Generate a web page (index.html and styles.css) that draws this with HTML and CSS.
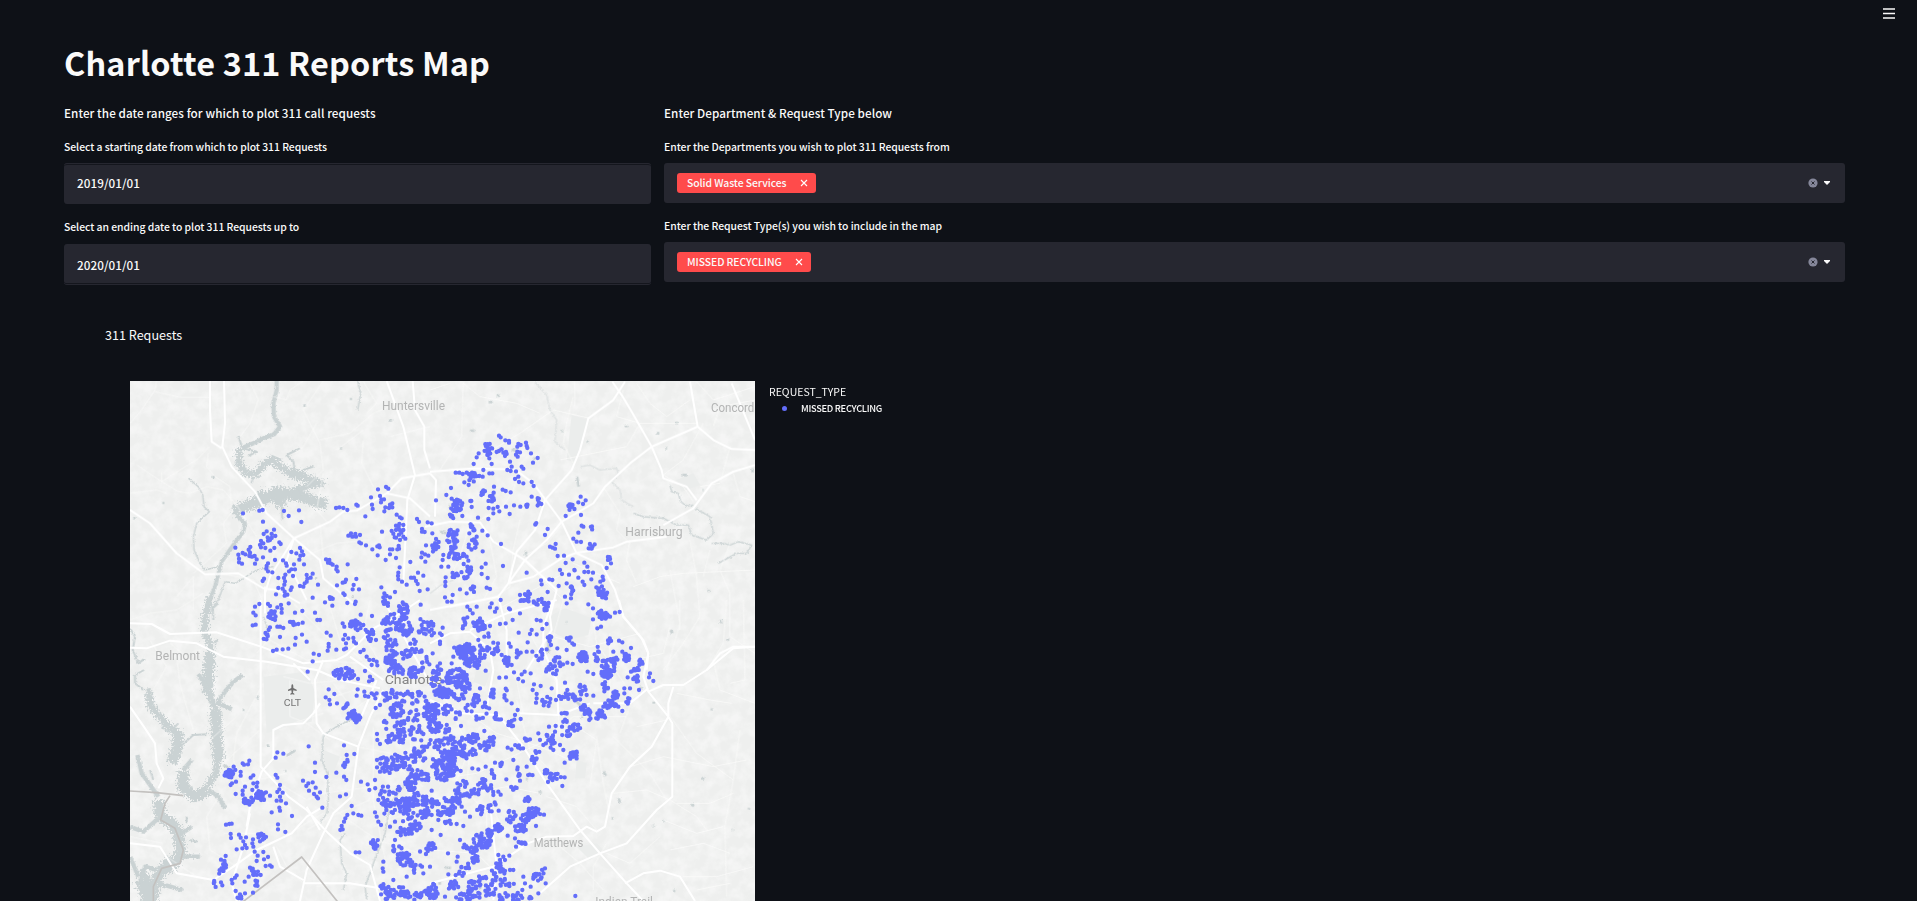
FILE: index.html
```html
<!DOCTYPE html>
<html lang="en">
<head>
<meta charset="utf-8">
<title>Charlotte 311 Reports Map</title>
<link rel="stylesheet" href="styles.css">
</head>
<body>
<header class="toolbar">
  <svg class="menu" viewBox="0 0 12 11"><path d="M0 1h12M0 5.5h12M0 10h12"/></svg>
</header>
<main class="page">
  <h1 class="title">Charlotte 311 Reports Map</h1>
  <div class="filters">
    <section class="dates">
      <p class="intro intro-dates">Enter the date ranges for which to plot 311 call requests</p>
      <label class="label l1">Select a starting date from which to plot 311 Requests</label>
      <div class="input line-top">2019/01/01</div>
      <label class="label l2">Select an ending date to plot 311 Requests up to</label>
      <div class="input line-bottom">2020/01/01</div>
    </section>
    <section class="types">
      <p class="intro intro-types">Enter Department &amp; Request Type below</p>
      <label class="label l3">Enter the Departments you wish to plot 311 Requests from</label>
      <div class="select">
        <span class="tag tag-dept"><span class="t1">Solid Waste Services</span><svg class="x" viewBox="0 0 8 8"><path d="M1 1l6 6M7 1l-6 6"/></svg></span>
        <span class="controls"><svg class="clear" viewBox="0 0 10 10"><circle cx="5" cy="5" r="4.6"/><path d="M3.5 3.5l3 3M6.500 3.500l-3 3"/></svg><svg class="caret" viewBox="0 0 6 4"><path d="M0 0h6v1l-3 3-3-3z"/></svg></span>
      </div>
      <label class="label l4">Enter the Request Type(s) you wish to include in the map</label>
      <div class="select">
        <span class="tag tag-type"><span class="t2">MISSED RECYCLING</span><svg class="x" viewBox="0 0 8 8"><path d="M1 1l6 6M7 1l-6 6"/></svg></span>
        <span class="controls"><svg class="clear" viewBox="0 0 10 10"><circle cx="5" cy="5" r="4.6"/><path d="M3.5 3.5l3 3M6.500 3.500l-3 3"/></svg><svg class="caret" viewBox="0 0 6 4"><path d="M0 0h6v1l-3 3-3-3z"/></svg></span>
      </div>
    </section>
  </div>
  <section class="chart">
    <h2 class="chart-title">311 Requests</h2>
    <div class="plot">
      <svg class="map" viewBox="0 0 1875 1560">
        <defs>
          <filter id="shore" x="-10%" y="-10%" width="120%" height="120%"><feTurbulence type="fractalNoise" baseFrequency=".17" numOctaves="2" seed="4"/><feDisplacementMap in="SourceGraphic" scale="9" xChannelSelector="R" yChannelSelector="G"/></filter>
          <filter id="lake" x="-10%" y="-10%" width="120%" height="120%" color-interpolation-filters="sRGB"><feTurbulence type="fractalNoise" baseFrequency=".2" numOctaves="3" seed="9"/><feDisplacementMap in="SourceGraphic" scale="34" xChannelSelector="R" yChannelSelector="G"/></filter>
          <filter id="land" x="-5%" y="-5%" width="110%" height="110%" color-interpolation-filters="sRGB"><feTurbulence type="fractalNoise" baseFrequency=".03" numOctaves="3" seed="8"/><feColorMatrix values="0 0 0 0 1  0 0 0 0 1  0 0 0 0 1  2.500 0 0 0 -.9"/></filter>
        </defs>
        <rect class="ground" width="1875" height="1560"/>
        <rect width="1875" height="1560" filter="url(#land)" opacity=".42"/>
        <g class="park">
          <path transform="translate(-120 657)" d="M520 230l130 -15 25 60 -10 90 -60 10 -75 25zM700 450l50 20-20 50-30-10z"/>
          <path transform="translate(900 -33)" d="M425 135l50 15-40 125-25-5zM355 740l50-25 80 30-10 50-60 15-60-30zM740 330l50-20 20 35-55 20z"/>
          <path transform="translate(900 657)" d="M440 480l30 10-5 45-30 0zM140 210l40 10-15 40-35-15zM440 740l60-10 20 20-40 30z"/>
        </g>
        <g class="water" filter="url(#lake)">
          <g transform="translate(-120 -213)">
            <path class="w16" d="M448 415V460L467 490 500 492 520 465 545 450 570 468 605 492 640 500 695 518 650 528 605 545"/>
            <path class="w24" d="M600 486L640 500M710 580L680 577 640 560 560 545 520 570 470 588 430 607M565 560L575 590M520 570L505 545"/>
          </g>
          <g transform="translate(-120 657)">
            <path class="w16" d="M360 -10L345 55 345 100 362 140 350 200 348 260 375 320 380 380 385 450 378 520 352 560"/>
            <path class="w24" d="M360 160L352 280M377 330L380 420 387 480"/>
            <path class="w16" d="M175 275L183 320 205 345 235 380 265 400M215 810L240 770M180 860L155 810"/>
            <path class="w24" d="M265 395L262 440 245 490M280 510L278 560 315 590 355 570M205 600L212 650 245 670 265 700 272 760 250 795 210 815 195 850 185 910M150 840L175 903"/>
          </g>
        </g>
        <g class="water" filter="url(#shore)">
          <g transform="translate(-120 -213)">
            <path class="w9" d="M560 205V240L550 280 552 320 570 350 552 373 520 385 490 400 455 415"/>
            <path class="w4" d="M630 415L590 435 610 455 615 480M640 480L670 470M445 378L455 410M458 415L500 425 475 438M490 500L485 520M575 450L545 438M640 560L625 530M575 590L577 628M440 470L445 440M660 510L700 530"/>
            <path class="w8" d="M440 615L465 640 460 665 430 705 395 755 375 830 347 900"/>
            <path class="w3" d="M295 505L325 530 338 555 342 590 358 605 320 640 310 680 312 720 330 760 345 780 385 770M550 770L500 780 435 820 405 815 385 870 360 900M803 215L812 250 803 300"/>
            <path class="w6" d="M367 501h7M780 267h6M750 415h6M217 579h6M130 625h6M640 287h8M898 331h8M785 860h6M675 805h6"/>
          </g>
          <g transform="translate(-120 657)">
            <path class="w9" d="M380 310L405 275 430 245 458 225M175 265L180 290M385 310L425 328M355 270L325 222"/>
            <path class="w9" d="M142 465L155 520 180 555 205 590M305 480L280 510M355 570L385 590 405 625M205 655L160 695 120 680M275 700L305 680M270 770L330 770M205 850L278 870M120 770L145 830M150 850L165 800 200 810"/>
            <path class="w4" d="M270 440L310 405 352 403M120 85L135 110 128 150 145 190 165 175M162 210L135 225 135 250 160 270M385 10L368 25 370 60M385 120L370 130M215 380L240 400M300 540L285 530M245 390L265 370M190 540L180 510M300 720L322 725M290 670L290 650"/>
            <path class="w3" d="M790 355L740 380 700 405 695 480 712 520 715 600 710 640 690 668M940 560L900 610 885 700 850 790 825 860 830 900M765 700L750 720 755 790 770 820 760 870M520 50L535 90"/>
            <path class="w6" d="M500 295l5-8M458 330h5M590 467l25-15M530 437h7M585 513h4M400 495l15 8"/>
          </g>
          <g transform="translate(900 -33)">
            <path class="w3" d="M720 345L725 365 745 370 752 395 770 408 790 405"/>
            <path class="faint" d="M315 37L350 75 360 120 380 150 375 215 405 240M450 290L480 285 510 300 560 295 565 310 545 335 570 360 575 390 610 410M0 670L40 640 70 630"/>
            <path class="w3" d="M610 430L640 440 700 445 740 465 775 465 785 495 830 510 850 490 840 440 795 415M845 520L880 520 900 525 925 515 965 525 950 550 920 550 865 580"/>
            <path class="w6" d="M176 96h12M200 77h10M120 182h14M585 168h8M680 190h8M740 155v8M706 235h5M757 315h14M441 320l5 30M470 215h6M395 183h4M288 545v14M245 238l15 5M310 268l7-5M818 360h3M836 660v6M722 780l5 10M870 750l5 8M893 806v6M968 295v12M30 485l20 5M55 410h8M408 758h4"/>
          </g>
          <g transform="translate(900 657)">
            <path class="w6" d="M722 90l5 10M870 60l5 8M893 117v6M846 325v6M671 305v6M632 260v8M450 350h10M435 300l20 20M355 120v40M520 515l8 12M565 595l6 13M782 612l10 6M815 535h8M545 655h5M668 675l4 6M700 663h4M905 690h4M957 624v4M730 870l5 5M325 577h10M288 537h5M25 850h8M45 803h18M408 67h4M150 860v10"/>
          </g>
        </g>
        <g class="minor">
          <path transform="translate(-120 -213)" d="M200 213L195 240 155 300 120 340M195 245L270 262 358 262M358 410L320 450 270 480 215 515 140 465M215 485V515L265 545 300 550 350 530 400 540 440 585 500 680M480 213L505 270 480 340 450 380M355 430L350 470 375 500 420 530 425 600M640 213L600 240 590 270 550 260M700 213L640 300 690 400 700 480 650 530M820 215L860 280 830 310M680 340L640 410 615 430M690 390L780 370 850 310 900 290M820 390L815 460 850 530M740 420L820 360M700 490L680 600 715 640M430 600L400 640 410 700 310 790M260 860L310 800V900M390 790L490 810 530 900M560 700L540 770 590 850M690 640L700 740M640 740L740 700 840 690M120 550L200 540 230 550M900 380L1020 350"/>
          <path transform="translate(900 -33)" d="M0 60L60 40M100 35L95 200 30 300M120 280L270 190 370 120 480 145M435 35V110M580 60L560 140 630 160 800 160M630 160L590 230 540 240 390 270M850 170L870 110 975 90M800 35L850 90 975 50M620 40L660 100 710 140 780 90M820 160L760 270 700 315 760 350 790 395M900 230L870 340 810 350M975 395L930 380 910 310M520 350L570 430 560 480 600 520M600 510L590 570 620 640M780 510L800 620 810 740 760 820 700 900M900 520L870 600 900 670 900 800 975 850M610 650L690 620 760 610 975 600M270 300L250 360 220 410 150 450M430 280L400 220 410 160 430 80M270 450L250 540 240 650 170 700M400 460L350 520 280 560M120 460L90 560 50 650M180 510L200 620 160 690M260 550L400 690M430 580L570 640M200 720L420 600M100 40L150 80 260 100 330 130M720 600L750 760 710 900M840 540L820 620"/>
          <path transform="translate(900 657)" d="M0 350L100 330 200 400 330 440 420 480M200 0L180 120 260 240 280 340M400 0L370 110 480 140 630 100M480 0L500 130 610 290 570 400M720 80L700 160 610 180M750 90V0M850 180L880 130 890 0M850 180L870 270 975 310M940 0L945 240 900 250M930 390L910 540 885 680 890 890M740 280L840 300 905 310M700 320L800 460 910 540M600 500L700 470 850 500 950 480M550 410L660 520 710 600M500 410L520 550 540 650M620 380L710 360M440 380L500 420 480 560M550 580L650 570 720 600 800 650 830 690M740 610L840 610 910 580M700 660L800 700 880 680M530 730L490 800 490 870M530 760L600 790 690 710M720 750L820 730 900 760M760 830L860 830 970 800M800 870L900 850M350 590L440 620 500 690M390 740L450 790 520 870M150 380L80 540 170 640 170 740M200 490L180 590 230 740M50 300L120 450 110 560M0 600L230 560 330 580M0 750L140 760 220 840M0 540L140 520 330 430 430 350M300 100L380 250 390 410M260 300L300 450 390 540M430 350L590 350M540 100L540 310"/>
          <path transform="translate(-120 657)" d="M120 60L180 40 260 30 340 -20M180 120L230 200 190 270M240 130L300 180 340 140M260 170L270 250 310 390M520 110L650 180 820 190M520 250L440 400 430 480 460 550 590 520M550 390L700 340M580 230L660 250 760 240M510 390L400 490M490 600L600 620 610 660M550 540L650 600 700 580 850 560M380 600L350 650 360 750 440 800 490 750M400 700L500 700 530 740 700 640M560 740L590 800 640 850M650 690L720 650 840 600M680 860L750 850 850 860M120 710L220 730M230 770L320 830M720 20L750 120 880 240M840 0L820 100 910 260M600 0L720 120M800 440L1000 480M850 380V600L890 800M880 280L960 390 970 600M730 250L790 330 860 280M700 300L860 250M920 500L1000 560M720 620L860 720 990 760M850 680L1000 620M600 240V350L650 370 720 420M440 350L360 420M550 100L500 160"/>
        </g>
        <g class="major">
          <path transform="translate(-120 -213)" d="M360 205V300L365 395 395 415M402 205L405 340 397 410 425 470 495 545 530 610 612 685 690 750 700 805 790 880M120 600L180 640 260 730 345 793 445 790 520 835 560 840 630 880M650 870L590 750 612 685 720 635 760 605 800 602 890 550 935 505 1020 490M525 850L540 800 612 685M890 213L940 350 975 495 952 570 940 820M968 213L975 300 1003 350 1003 420 1020 475M890 550L960 565 1020 620M525 830V910"/>
          <path transform="translate(900 -33)" d="M-15 470L60 455 150 457 190 515 285 570 380 660 360 740 365 780 290 900M0 305L130 295 255 298 310 340 395 455 440 550 515 585 555 660 580 740 640 810 655 850 650 900M585 35L550 90 475 145 450 240 425 300 345 390 315 480 260 545 235 640 205 680 230 780 230 900M547 35L575 75 605 125 665 230 695 300 700 325 770 350 800 390M780 35L803 170 850 210 905 237 975 240M803 170L665 230 600 280 525 350 490 400 395 455 350 510 285 570 235 640 205 680 0 720M205 680L60 710M235 640L310 620 395 565 440 548 550 532 590 515 710 500M700 465L790 415 845 340 910 305 975 285M905 40L975 210M975 830L910 830 870 850 830 900M0 310L18 330 15 440"/>
          <path transform="translate(-120 657)" d="M120 70L185 72 240 102 380 97 520 142 640 190 740 180 770 165 850 85 900 60 990 0M120 143L170 145 240 122 320 130 400 170 530 185 680 210 750 240 870 265M120 320L165 385 195 430 200 490 220 535 205 565M512 0V500L595 590 650 630 715 700 780 760 840 795 870 903M470 680L480 620 515 515 550 475 550 390 580 375 640 370 670 340 690 310M610 190L660 240M700 180L675 240 680 370 700 400 805 440 840 350 880 270M805 440L785 590 730 640 700 700 650 810 630 903M700 620L650 650 605 700 500 750 430 800 370 840 260 820 210 740 120 730M690 690L650 620M480 640L460 740 425 850 440 903M550 740L570 800 640 840M640 850L780 850 870 865M780 170L880 240M880 0L1020 250M810 360L860 240"/>
          <path transform="translate(900 657)" d="M567 0L580 50 635 115 655 160 640 230 655 275 715 350 727 370V590L680 630 590 730 510 760 420 800 330 880M205 345L280 440 350 550 450 690 510 760 590 850 640 903M655 275L700 255 760 255 830 210 910 145 975 140M730 260L715 310 715 350 665 440 600 500 545 580 525 680 500 695 470 680 430 708 350 710 250 745M585 850L640 820 690 812 750 830 795 903M655 265L600 310 490 310M370 0L340 80V150L380 240 385 345 270 340M385 345L480 310M0 130L60 100 120 95 180 150 190 210 170 330M120 90L230 40 380 0M0 300L100 340 205 345M0 850L190 800 280 740M180 610L200 800 190 900"/>
        </g>
        <g class="boundary"><path transform="translate(-120 657)" d="M120 573L200 578 280 587M240 587L225 610 212 660 255 685 280 750 270 790 215 805 190 860V910M455 908L635 771 745 908"/></g>
        <g class="places">
          <text x="756" y="87" textLength="189" lengthAdjust="spacingAndGlyphs">Huntersville</text>
          <text x="1743" y="93" textLength="130" lengthAdjust="spacingAndGlyphs">Concord</text>
          <text x="1486" y="465" textLength="172" lengthAdjust="spacingAndGlyphs">Harrisburg</text>
          <text x="76" y="838" textLength="134" lengthAdjust="spacingAndGlyphs">Belmont</text>
          <text x="1211" y="1398" textLength="149" lengthAdjust="spacingAndGlyphs">Matthews</text>
          <text x="1396" y="1576" textLength="173" lengthAdjust="spacingAndGlyphs">Indian Trail</text>
          <text class="city" x="764" y="909" textLength="173" lengthAdjust="spacingAndGlyphs">Charlotte</text>
          <text class="airport" x="461" y="975" textLength="52" lengthAdjust="spacingAndGlyphs">CLT</text>
          <path class="plane" d="M487 910c3 0 3 6 3 11l10 5v4l-10-2-1 7 4 3v3l-6-1-6 1v-3l4-3-1-7-10 2v-4l10-5c0-5 0-11 3-11z"/>
        </g>
        <path id="reports" class="reports"/>
      </svg>
      <aside class="legend">
        <div class="legend-title">REQUEST_TYPE</div>
        <div class="legend-item"><span class="marker"></span><span class="legend-name">MISSED RECYCLING</span></div>
      </aside>
    </div>
  </section>
</main>
<script src="reports.js"></script>
</body>
</html>
```
FILE: styles.css
```css
* { box-sizing: border-box; }
html, body { height: 100%; }
body { margin: 0; overflow: hidden; background: #0e1117; color: #fafafa; font-family: "Noto Sans CJK JP", "Noto Sans", sans-serif; }
.toolbar { height: 38px; padding: 8px 22px 0 0; display: flex; justify-content: flex-end; }
.menu { width: 12px; height: 11px; stroke: #fafafa; stroke-width: 1.4; }
.page { padding: 0 72px 0 64px; }
.title { margin: 0 0 2px; height: 48px; line-height: 48px; font-size: 32.4px; font-weight: 700; letter-spacing: .18px; white-space: nowrap; }
.filters { display: grid; grid-template-columns: 587px 1fr; gap: 13px; height: 201px; }
.dates, .types { display: flex; flex-direction: column; padding-top: 15px; }
.intro { margin: 0; height: 20px; line-height: 20px; font-size: 11.7px; font-weight: 500; letter-spacing: .06px; white-space: nowrap; }
.label { display: block; font-size: 10.4px; font-weight: 500; letter-spacing: -.04px; line-height: 16px; height: 16px; white-space: nowrap; }
.l1, .l3 { margin: 16px 0 8px; }
.l2 { margin: 15px 0 9px; }
.l4 { margin: 15px 0 8px; }
.input { height: 41px; border-radius: 3px; background: #262730; padding: 0 13px; font-size: 11.7px; font-weight: 500; letter-spacing: .06px; line-height: 41px; }
.line-top { border-top: 1px solid #262730; box-shadow: inset 0 1px #14161d; line-height: 38px; }
.line-bottom { border-bottom: 1px solid #262730; box-shadow: inset 0 -1px #14161d; }
.select { height: 40px; border-radius: 3px; background: #262730; padding: 0 15px 0 13px; display: flex; align-items: center; justify-content: space-between; }
.tag { height: 20px; padding: 0 8px 0 10px; background: #ff4b4b; border-radius: 3px; display: flex; align-items: center; justify-content: space-between; font-size: 10.4px; font-weight: 500; letter-spacing: -.08px; line-height: 20px; white-space: nowrap; }
.tag-dept { width: 139px; }
.tag-type { width: 134px; }
.x { width: 8px; height: 8px; stroke: #fff; stroke-width: 1.1; }
.controls { display: flex; align-items: center; gap: 6px; }
.clear { width: 10px; height: 10px; fill: #85879a; stroke: #262730; }
.clear circle { stroke: none; }
.caret { width: 6px; height: 4px; fill: #fafafa; }
.chart { padding: 36px 0 0 41px; }
.chart-title { margin: 0; height: 20px; line-height: 20px; font-size: 12.6px; font-weight: 400; white-space: nowrap; }
.plot { display: flex; margin: 36px 0 0 25px; }
.map { width: 625px; height: 520px; flex: none; overflow: hidden; }
.ground { fill: #eeefee; }
.park { fill: #ebedec; }
.water path { fill: none; stroke: #cad2d3; stroke-linejoin: round; }
.water .faint { stroke: #dde1e1; stroke-width: 4; }
.w3 { stroke-width: 4; } .w4 { stroke-width: 6; } .w6 { stroke-width: 8; } .w8 { stroke-width: 12; }
.w9 { stroke-width: 13; } .w16 { stroke-width: 21; } .w24 { stroke-width: 33; }
.minor { fill: none; stroke: #fcfcfb; stroke-width: 2.4; stroke-linejoin: round; opacity: .8; }
.major { fill: none; stroke: #fff; stroke-width: 6; stroke-linejoin: round; }
.boundary { fill: none; stroke: #c3c1bf; stroke-width: 5; stroke-linejoin: round; }
.places { font: 36px Roboto, sans-serif; fill: #b3b4b4; }
.city { font-size: 38px; fill: #858585; }
.airport { font-size: 29px; fill: #777; }
.plane { fill: #6f6f6f; }
.reports { fill: none; stroke: #636efa; stroke-width: 13; stroke-linecap: round; }
.legend { padding: 3px 0 0 14px; white-space: nowrap; }
.legend-title { font-size: 10.5px; line-height: 16px; height: 16px; }
.legend-item { display: flex; align-items: center; height: 16px; padding-left: 13px; font-size: 9.3px; font-weight: 500; letter-spacing: -.3px; }
.marker { width: 5px; height: 5px; border-radius: 50%; background: #636efa; margin-right: 14px; }
```
FILE: reports.js
```js
// Each sheet has an origin and a list of reports. "x,y" is one report;
// "x,y,rx,ry,n" is a neighbourhood of n reports around a centre.
const sheets = [
  [-120, -213, `459,610 508,602 518,600 582,603 596,618 627,601 634,636 519,635 552,659 530,664 521,672 545,672 533,682 545,684 556,678 540,690 513,693 510,705 526,714 520,700 534,692 568,697 572,702 553,714 541,722 513,712 436,713 481,711 476,719 458,729 445,734 447,746 447,757 456,761 466,733 480,728 486,740 494,738 500,748 478,738 495,761 519,742 555,750 530,768 534,760 529,776 534,784 547,787 522,806 518,813
604,726 619,730 630,714 636,724 631,737 640,735 628,749 579,751 588,760 590,767 612,763 642,763 604,778 597,784 615,778 586,794 609,798 582,804 585,814 583,824 565,804 605,832 602,840 565,834 578,836 584,845 584,857 592,854 558,853 650,795 668,791 662,803 652,806 650,815 644,820 640,830 630,828 684,824 668,863
738,594 748,592 760,594 772,600 799,584 803,587 826,619 843,562 864,538 888,531 895,536 870,558 874,568 882,568 873,577 846,584 848,597 886,592 900,584 907,580 897,594 907,592 883,604 920,614 930,622 935,625 876,665 905,663 918,647 928,642 940,645 929,660 940,660 918,660 910,671 927,674 918,683 930,690 940,680 946,686 914,682 926,650 934,668
775,677 783,670 787,680 796,672 798,680 810,675 808,697 813,700 828,706 847,718 862,709 867,706 869,712 863,736 887,750 900,718 907,718 900,733 922,718 926,708 927,716 918,744 981,627 987,636 1013,637 996,657 1004,666 996,665 1008,706 996,728 1005,733 994,742 1006,755 1015,737 961,756 929,772 925,788 924,798 925,808 936,815 950,824 963,803 972,803 984,788 1000,797 978,813 983,822 989,843 1013,838
708,748 718,750 714,758 722,760 728,764 740,770 739,778 743,784 773,763 799,807 768,809 765,816 758,818 741,826 791,825 788,838 807,838 760,850 764,855 874,832 915,846 883,850 890,858 880,862 900,862`],
  [900, -33, `207,197 212,202 226,211 237,213 237,218 265,222 272,225 262,230 288,218 290,228 292,234 303,250 323,264 309,278 240,275 245,290 232,300 258,304 275,290 280,296 174,235,13,20,28 172,255 178,265 215,238 207,243 220,248 230,252 225,258 200,246 214,238 228,246 262,245 270,247 263,260 258,254 146,250 140,262 131,282 185,282 160,300 178,310 187,310 242,303 265,320 255,327 267,336 280,340 305,336 311,348 77,308 88,308 98,312 110,308 116,312 103,337 116,345 128,322,18,16,18 148,318 158,320 63,354 49,375 18,391 160,369,11,8,12 192,350 191,368 218,359 227,363 242,367 184,388,9,16,14 65,386 80,407,20,19,40 65,440,7,9,8 97,438 121,393 124,393 125,411 144,443 175,447 176,414 190,416 203,411 208,424 190,430 228,410 239,432 252,406 271,410 305,380 292,400,4,12,8 325,395,5,15,9 334,402 452,380 467,391 445,397 459,402 425,412,13,11,14 407,438 453,435 318,465,4,7,4 353,477 345,495 455,467 460,470 484,475,3,9,4 445,488 430,506 440,515 453,516 480,530,8,8,9 494,523 377,522 375,536 360,530 368,533 383,558 402,557 428,568 407,579 390,600 396,612 536,566,5,6,6 543,580 530,594 463,578 472,590 463,606 475,606 489,608 484,628 434,601 417,614 433,600 445,623 458,635 463,645 410,640 425,655,6,20,13 386,648 333,631 335,643 358,628 367,630 353,666 518,620 511,635 520,630 499,652 518,665,16,18,28 528,685 405,680 423,685
5,460 7,490 70,487,16,10,16 130,470,18,11,16 157,482 173,496 118,490 140,500 65,515,17,25,34 127,522,14,17,23 20,520,10,14,10 8,540,10,14,8 40,555 38,570 65,555,18,14,17 90,560,18,10,11 110,560 115,572 158,544 213,522 219,588 167,581 155,592 155,612 173,624 105,600,23,25,22 34,590 55,590 73,617,11,11,11 47,622 46,636 46,648 90,658 130,655,9,11,10 110,670 170,653 180,657 68,675 45,682 290,608 270,675 295,665 300,672 287,685,9,13,12 325,690 335,687`],
  [-120, 657, `508,12 495,20 490,38 497,46 488,76 497,74 534,12 540,18 596,10 573,15 562,22 575,27 575,38 548,46,17,14,18 555,60 540,82 562,80 570,80 580,84 604,73,13,9,12 625,72 638,68 615,38 637,33 536,90 525,108,9,13,11 570,111 617,114 636,104 615,134 650,125 549,153 560,149 578,148 595,146 705,7 722,-4,8,10,8 727,17 772,9 795,12 797,5 675,38 682,60 690,60 758,70 763,80 780,72 795,75,22,16,28 812,44 820,75 846,48 827,90 840,105,13,18,20 858,120 765,105 760,118 768,130 768,145 762,148 775,115 790,114 792,125 798,130 710,98 722,107 716,132 716,140 713,152 739,149 671,161 687,165 668,184 653,215 821,150 811,156 830,170 838,180 850,180 860,185 862,196 845,195 765,220,35,18,54 804,237 825,213 840,230 837,244 847,240 716,268 733,282 707,292 718,300 720,313 741,310 800,287 803,268 823,275 825,288 835,290 845,280 860,280 856,295 870,315 857,324 765,314,9,12,10 793,350,23,18,46 760,325 852,285
562,457 580,461 557,473 656,439 762,436 793,462 770,465 772,480 765,490,9,12,11 675,488 675,516 739,518 709,531 762,530 769,540 813,545 833,553 838,570 855,540 870,515 861,502 861,480 478,482 474,493 458,490 462,494 431,500 436,510 415,522,15,13,40 452,516 452,527 438,545 426,550 422,555 437,582 490,526 482,533 502,548 490,550 500,560 465,560 458,572 487,570 458,584 475,602,15,12,36 510,588,18,16,40 528,577 540,587 557,525 562,533 570,555 568,568 562,576 578,578 570,590 560,602 573,602 588,610 545,637 568,623 570,632 606,648 564,673 564,688 586,696 639,542 655,550 668,547 649,558 657,572 677,563 672,582 690,577 680,590 684,595 697,623 750,589 768,583 785,618 772,645 766,655 790,640 805,645 814,647 762,665 755,678 758,688 751,690
408,674 418,672 425,671 422,702 423,714 447,704 452,713 460,724 468,712 489,718 487,730 465,735 470,744 440,748 457,745 517,708,14,13,22 510,724 490,740 494,755 503,767 520,756 534,771 522,778 527,798 545,800 540,796 500,783 480,803 407,768 393,779 405,793,10,12,13 394,815,8,12,10 374,852,6,10,8 393,847 397,856 425,840 427,850 440,826 435,833 476,830 464,845 512,825 495,815,13,14,14 500,850,8,9,8 437,873 450,883 465,880 489,878 450,895,8,7,8 797,757 808,757 860,650 855,637 865,665 873,675 858,732,16,15,24
890,10,15,14,12 940,30,15,25,34 992,14 885,65,10,10,11 905,70,22,30,29 945,80,23,30,56 1000,80,20,28,22 890,110,10,20,13 908,145,20,28,30 900,190,18,25,36 945,160,18,20,20 980,140,22,23,17 925,210,20,15,24 975,215,20,20,44 1005,190,16,20,12 890,290,16,15,12 915,280,15,15,12 918,330,23,23,54 950,290,20,22,17 990,310,28,35,30 965,350,22,20,16 885,375,7,15,7 930,380,18,22,24 905,415,20,15,22 935,410,14,18,19 861,402 862,420 870,432 980,400,25,25,25 990,440,23,20,16 880,480,16,14,12 915,485,28,25,42 955,475,25,20,25 990,470,23,20,21 890,510,16,18,12 965,550,20,23,54 980,520,16,20,18 1005,535,14,20,14 950,500,18,14,10 870,570,16,14,9 910,570,23,18,15 890,605,23,15,16 940,610,32,16,60 985,600,28,22,38 900,630,22,18,15 950,645,23,22,23 1000,640,23,20,23 865,600 875,610 915,665 900,680 975,680,18,17,24 945,695,25,16,28 915,720 910,738 880,785 878,805 880,815 940,775,23,22,46 925,750,18,12,9 965,790,14,12,11 1005,750,17,16,10 985,810,16,15,9 950,830 875,855,8,12,11 895,880,25,20,32 930,875,22,16,21 970,890,28,13,25 1005,875,17,16,16 910,840 1000,820`],
  [900, 657, `5,90,8,25,14 38,83 35,105 30,125 30,132 8,160 30,190 52,5 65,5 112,20 120,30 140,20 128,40 112,52 180,22 185,10 200,25 195,35 212,0 237,25 240,28 270,40 266,98 248,60 227,70 210,72 145,78,23,15,42 102,70,7,20,13 150,55 163,110 175,100 176,110 180,78 285,0,18,6,10 320,10,23,10,11 350,20,15,13,20 410,10 475,13 489,25 517,45,20,17,26 489,58 502,85 513,80 555,38 569,36 540,50 320,60 332,62 350,72 337,87 305,90 300,102 320,103 293,127 355,115,12,10,11 417,115,7,7,6 427,130 432,134 535,122,9,8,8 567,122 577,127 603,144 363,135 350,148 382,145 410,150 145,120 150,137 172,145 190,128 204,130 237,130 242,140 195,150,20,15,16 215,165 231,184,13,14,24 268,150,10,15,7 260,172 290,155 307,155 333,165,15,20,13 365,210,18,20,17 385,185,16,18,17 412,188 428,192 460,170,18,16,56 500,160,7,25,14 550,155 577,155 588,172,10,14,20 555,180,14,14,18 532,205,23,30,70 473,215 490,222 603,215 633,190,6,13,9 615,210,12,12,10 593,232 620,235,14,17,16 600,265 583,265 583,280 660,220 657,232 670,243 627,270 245,195 252,217 284,215 275,223 265,237 279,244 228,232 208,233 302,220 188,280,8,17,11 227,285,5,20,8 245,310 263,330 255,345 312,253 308,270 320,282 320,295 318,308 332,258 365,265 350,305,14,15,15 378,300 405,248 400,290,14,12,9 412,270 425,290,15,9,9 443,292,18,12,13 455,265,13,11,16 470,285 490,287 526,258,9,20,12 555,285,10,16,17 540,315,18,16,28 595,302,8,13,10 577,333 565,320 520,320 510,345,18,15,38 465,328,15,14,26 482,350,10,15,10 403,352,15,15,13 435,382,16,14,20 410,400,16,13,11 396,380 377,378 357,380 375,395 350,405 360,425,15,25,24 325,400 330,420 340,435 390,435 400,450 370,450 430,465,17,14,24 404,488 440,455 347,510,5,12,8 375,530,23,12,26 404,532 354,546 397,558
30,100 65,190 70,170 115,165,25,35,110 160,155,17,20,18 85,150,20,15,24 140,190,14,14,14 20,210,15,15,18 75,230,33,26,84 35,275,23,20,58 100,255,22,25,40 20,245,18,18,18 110,225 150,265 167,212 50,280,16,12,22 85,290,18,13,18 138,300,10,17,22 120,320,17,15,14 165,308 170,328,13,15,9 5,335,25,30,70 50,330,16,18,14 78,345,14,15,10 15,380,20,25,40 50,385,15,13,9 93,378 147,350,13,13,8 205,350,16,12,9 245,370,13,16,12 213,358 272,357 163,393 130,415,16,15,34 105,425,20,20,17 70,425,14,22,15 45,420,14,16,9 15,430,20,20,20 185,425,14,17,16 160,440,18,15,17 125,460,13,13,11 85,450,22,20,28 50,480,28,30,78 100,465,18,18,14 40,520,26,23,60 65,515,18,18,22 18,490,17,18,16 287,418,8,8,6 300,418 258,445,22,10,9 233,443 328,455,12,9,6 312,480,9,13,12 250,480 215,490,5,12,6 266,512,8,17,9 290,500 303,523,10,5,5 190,520,7,17,8 195,488 167,500 145,508 127,505 92,513 82,550 229,538 270,542 248,562,13,8,8 155,550,18,18,22 100,550,13,13,9 180,570,14,15,10 205,575 212,584 190,585 140,575,18,14,15 110,585,18,10,16 80,585,14,25,28 50,600,10,10,10 5,610,23,12,32 45,635,25,15,40 75,610,18,14,16 5,572 5,645 95,620 105,635 120,650 155,630,14,13,17 185,620,18,15,11 206,632 25,660 55,670,12,9,9 80,672 100,678 293,597,12,9,12 310,638,22,15,46 342,644 288,655,18,12,24 245,650,18,20,20 275,685,22,15,25 318,678 233,707 205,682,14,12,28 180,695,12,12,11 160,720,30,25,66 125,745,17,15,36 135,775,10,16,16 105,735,10,10,6 90,720 32,705 5,740,14,13,16 54,760 83,770 80,785 280,725,15,8,11 255,715 258,740 205,765 210,780 238,767 220,770 225,780 203,795,10,12,11 222,815,13,15,11 160,830,16,9,9 190,830,13,20,11 105,800,17,11,11 88,825,16,14,9 55,823 70,855,18,16,25 130,850,22,17,23 180,870,20,22,24 220,850,14,14,11 120,885,34,16,38 90,890,13,11,12 10,875,17,24,40 45,890 240,810 250,810 240,850,14,12,8 260,890,18,14,28 220,890,17,13,12 325,825,20,20,28 345,805 347,850 280,830 285,850 302,860 325,880 305,893,12,6,8 277,870 436,888 0,800 5,690`]
];

let seed = 311;
const random = () => (seed = (seed * 16807) % 2147483647) / 2147483647;

let path = "";
const plot = (x, y) => { path += `M${x.toFixed(1)} ${y.toFixed(1)}h.01`; };
for (const [left, top, list] of sheets) {
  for (const item of list.split(/\s+/)) {
    const [x, y, rx, ry, n] = item.split(",").map(Number);
    if (!n) { plot(left + x, top + y); continue; }
    for (let i = 0; i < Math.ceil(n * 0.6); i++) {
      const angle = random() * Math.PI * 2;
      const reach = Math.sqrt(random());
      plot(left + x + rx * reach * Math.cos(angle), top + y + ry * reach * Math.sin(angle));
    }
  }
}
document.getElementById("reports").setAttribute("d", path);
```
